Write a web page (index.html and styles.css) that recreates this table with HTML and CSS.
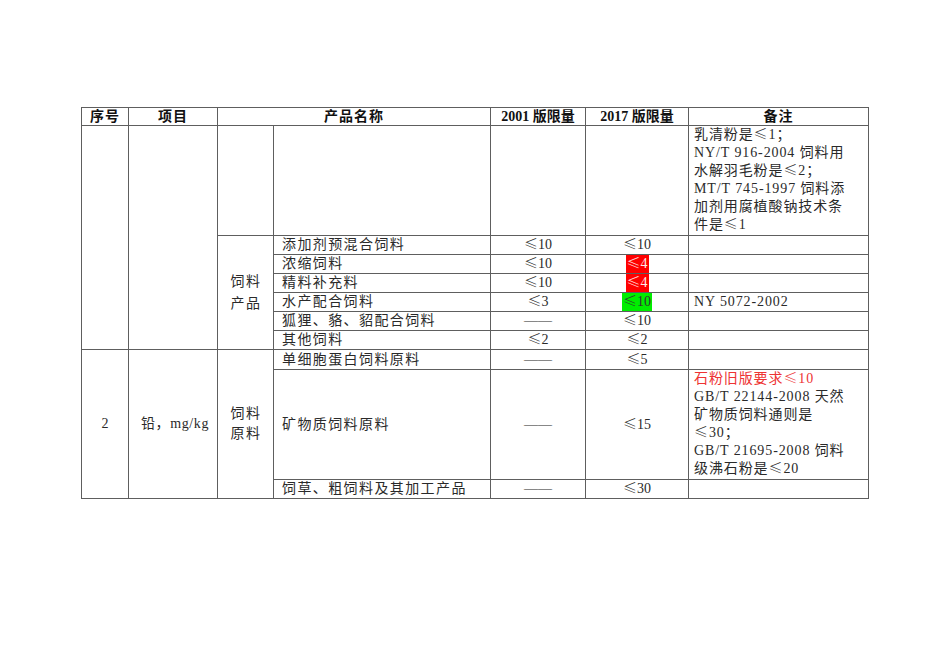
FILE: index.html
```html
<!DOCTYPE html>
<html lang="zh-CN">
<head>
<meta charset="utf-8">
<title>饲料卫生标准对比</title>
<link rel="stylesheet" href="styles.css">
</head>
<body>
<table class="grid">
  <colgroup>
    <col class="c-no"><col class="c-item"><col class="c-cat"><col class="c-name"><col class="c-v1"><col class="c-v2"><col class="c-note">
  </colgroup>
  <thead>
    <tr class="head">
      <th>序号</th>
      <th>项目</th>
      <th colspan="2">产品名称</th>
      <th>2001 版限量</th>
      <th>2017 版限量</th>
      <th>备注</th>
    </tr>
  </thead>
  <tbody>
    <tr>
      <td rowspan="7"></td>
      <td rowspan="7"></td>
      <td></td>
      <td class="name"></td>
      <td class="val"></td>
      <td class="val"></td>
      <td class="note note-first">乳清粉是<span class="le">≤</span>1；<br>NY/T 916-2004 饲料用<br>水解羽毛粉是<span class="le">≤</span>2；<br>MT/T 745-1997 饲料添<br>加剂用腐植酸钠技术条<br>件是<span class="le">≤</span>1</td>
    </tr>
    <tr>
      <td rowspan="6" class="cat cat-a">饲料<br>产品</td>
      <td class="name">添加剂预混合饲料</td>
      <td class="val"><span class="le">≤</span>10</td>
      <td class="val"><span class="le">≤</span>10</td>
      <td class="note"></td>
    </tr>
    <tr>
      <td class="name">浓缩饲料</td>
      <td class="val"><span class="le">≤</span>10</td>
      <td class="val"><span class="hl hl-red"><span class="le">≤</span>4</span></td>
      <td class="note"></td>
    </tr>
    <tr>
      <td class="name">精料补充料</td>
      <td class="val"><span class="le">≤</span>10</td>
      <td class="val"><span class="hl hl-red"><span class="le">≤</span>4</span></td>
      <td class="note"></td>
    </tr>
    <tr>
      <td class="name">水产配合饲料</td>
      <td class="val"><span class="le">≤</span>3</td>
      <td class="val"><span class="hl hl-green"><span class="le">≤</span>10</span></td>
      <td class="note">NY 5072-2002</td>
    </tr>
    <tr>
      <td class="name">狐狸、貉、貂配合饲料</td>
      <td class="val">——</td>
      <td class="val"><span class="le">≤</span>10</td>
      <td class="note"></td>
    </tr>
    <tr>
      <td class="name">其他饲料</td>
      <td class="val"><span class="le">≤</span>2</td>
      <td class="val"><span class="le">≤</span>2</td>
      <td class="note"></td>
    </tr>
    <tr>
      <td rowspan="3" class="num">2</td>
      <td rowspan="3" class="item">铅，mg/kg</td>
      <td rowspan="3" class="cat cat-b">饲料<br>原料</td>
      <td class="name name-gap">单细胞蛋白饲料原料</td>
      <td class="val">——</td>
      <td class="val"><span class="le">≤</span>5</td>
      <td class="note"></td>
    </tr>
    <tr>
      <td class="name">矿物质饲料原料</td>
      <td class="val">——</td>
      <td class="val"><span class="le">≤</span>15</td>
      <td class="note note-gap"><span class="warn">石粉旧版要求<span class="le">≤</span>10</span><br>GB/T 22144-2008 天然<br>矿物质饲料通则是<br><span class="le">≤</span>30；<br>GB/T 21695-2008 饲料<br>级沸石粉是<span class="le">≤</span>20</td>
    </tr>
    <tr>
      <td class="name">饲草、粗饲料及其加工产品</td>
      <td class="val">——</td>
      <td class="val"><span class="le">≤</span>30</td>
      <td class="note"></td>
    </tr>
  </tbody>
</table>
</body>
</html>
```

FILE: styles.css
```css
html, body {
  margin: 0;
  padding: 0;
  background: #ffffff;
}

body {
  padding: 107px 0 0 81px;
  font-family: "Liberation Serif", "Noto Sans CJK SC", serif;
  font-size: 14px;
  color: #2a2a2a;
}

.grid {
  border-collapse: collapse;
  table-layout: fixed;
  width: 788px;
}

.c-no { width: 47px; }
.c-item { width: 89px; }
.c-cat { width: 56px; }
.c-name { width: 217px; }
.c-v1 { width: 95px; }
.c-v2 { width: 103px; }
.c-note { width: 180px; }

.grid th,
.grid td {
  border: 1px solid #5e5e5e;
  padding: 0;
  line-height: 18px;
  vertical-align: middle;
  text-align: center;
  white-space: nowrap;
}

.head th {
  height: 17px;
  line-height: 17px;
  font-weight: bold;
  color: #111;
}

.head th:nth-child(1),
.head th:nth-child(2),
.head th:nth-child(3),
.head th:nth-child(6) {
  letter-spacing: 1px;
}

.name {
  text-align: left !important;
  padding-left: 8px !important;
  letter-spacing: 1.4px;
}

.name-gap {
  padding-top: 1px !important;
}

.note {
  text-align: left !important;
  padding-left: 5px !important;
  letter-spacing: 0.9px;
  vertical-align: top !important;
}

.note-first {
  padding-bottom: 1px !important;
}

.note-gap {
  padding-bottom: 1px !important;
}

.cat {
  letter-spacing: 1.4px;
  padding-left: 1px !important;
}

.cat-a {
  line-height: 22px !important;
}

.cat-b {
  line-height: 20px !important;
}

.item {
  letter-spacing: 0.6px;
  padding-left: 4px !important;
}

.le {
  font-family: "Noto Sans CJK SC", sans-serif;
  font-weight: 300;
  line-height: 12px;
}

.hl {
  display: inline-block;
  height: 18px;
  line-height: 18px;
  vertical-align: top;
  padding: 0 1px;
}

.hl-red {
  background: #ff0000;
  color: #ffe8e8;
}

.hl-green {
  background: #00ee00;
  color: #333;
}

.warn {
  color: #ee3333;
}
```
